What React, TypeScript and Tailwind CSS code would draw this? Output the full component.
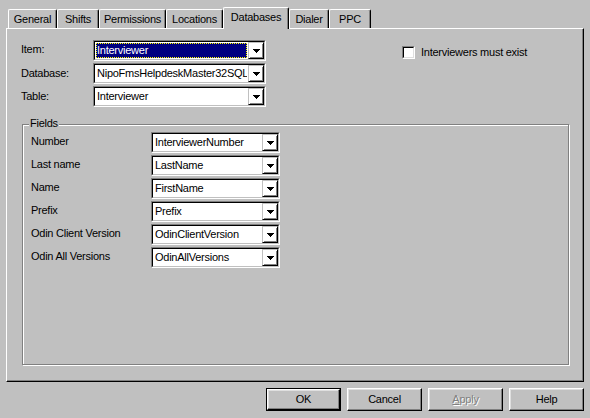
import React from 'react';

interface ComboProps {
  value: string;
  className: string;
  selected?: boolean;
}

const Arrow = () => (
  <svg width="7" height="4" viewBox="0 0 7 4" shapeRendering="crispEdges">
    <rect x="0" y="0" width="7" height="1" fill="#000" />
    <rect x="1" y="1" width="5" height="1" fill="#000" />
    <rect x="2" y="2" width="3" height="1" fill="#000" />
    <rect x="3" y="3" width="1" height="1" fill="#000" />
  </svg>
);

const Combo = ({ value, className, selected }: ComboProps) => (
  <div className={`${className} h-[21px] border border-t-[#808080] border-l-[#808080] border-r-white border-b-white`}>
    <div className="flex h-full border border-t-black border-l-black border-r-[#c0c0c0] border-b-[#c0c0c0] bg-white">
      <div className="flex-1 min-w-0 p-px">
        <div
          className={`h-full overflow-hidden whitespace-nowrap pl-px leading-[15px] ${
            selected
              ? 'bg-[#000080] text-white outline-1 outline-dotted outline-[#ffff00] -outline-offset-1'
              : 'text-black'
          }`}
        >
          {value}
        </div>
      </div>
      <div className="w-[16px] h-full flex items-center justify-center border border-t-[#c0c0c0] border-l-[#c0c0c0] border-r-black border-b-black shadow-[inset_1px_1px_0_#fff,inset_-1px_-1px_0_#808080]">
        <Arrow />
      </div>
    </div>
  </div>
);

const tabs = [
  { label: 'General', w: 'w-[49px]' },
  { label: 'Shifts', w: 'w-[42px]' },
  { label: 'Permissions', w: 'w-[67px]' },
  { label: 'Locations', w: 'w-[57px]' },
  { label: 'Databases', w: 'w-[66px]', active: true },
  { label: 'Dialer', w: 'w-[40px]' },
  { label: 'PPC', w: 'w-[42px]' },
];

const fields = [
  ['Number', 'InterviewerNumber'],
  ['Last name', 'LastName'],
  ['Name', 'FirstName'],
  ['Prefix', 'Prefix'],
  ['Odin Client Version', 'OdinClientVersion'],
  ['Odin All Versions', 'OdinAllVersions'],
];

const Button = ({ children, isDefault }: { children: React.ReactNode; isDefault?: boolean }) => (
  <div className={`w-[75px] h-[23px] ${isDefault ? 'border border-black' : ''}`}>
    <div className="h-full w-full flex items-center justify-center border border-t-white border-l-white border-r-black border-b-black shadow-[inset_-1px_-1px_0_#808080,inset_1px_1px_0_#dfdfdf]">
      {children}
    </div>
  </div>
);

const App: React.FC = () => {
  return (
    <div className="w-[590px] h-[418px] bg-[#c0c0c0] pt-[7px] overflow-hidden text-[11px] tracking-[-0.25px] text-black font-['Liberation_Sans',Arial,sans-serif]">
      {/* tab strip */}
      <div className="flex items-end h-[21px] ml-[8px]">
        {tabs.map((t) => (
          <div
            key={t.label}
            className={`${t.w} ${
              t.active ? 'h-[22px] -mb-px z-10 pb-[3px]' : 'h-[19px]'
            } relative flex items-center justify-center bg-[#c0c0c0] border-l border-t border-r border-l-white border-t-white border-r-black rounded-t-[2px] shadow-[inset_-1px_0_0_#808080]`}
          >
            {t.label}
          </div>
        ))}
      </div>

      {/* tab page */}
      <div className="ml-[6px] w-[578px] h-[354px] border border-l-white border-t-white border-r-black border-b-black shadow-[inset_-1px_-1px_0_#808080] pt-[11px] pl-[14px]">
        <div className="flex">
          <div className="grid grid-cols-[72px_173px] gap-y-[2px] items-center">
            <span className="leading-[13px] pb-[2px]">Item:</span>
            <Combo className="w-[173px]" value="Interviewer" selected />
            <span className="leading-[13px] pb-[1px]">Database:</span>
            <Combo className="w-[173px]" value="NipoFmsHelpdeskMaster32SQL" />
            <span className="leading-[13px]">Table:</span>
            <Combo className="w-[173px]" value="Interviewer" />
          </div>
          <div className="ml-[136px] mt-[6px] flex items-center h-[13px] gap-[6px]">
            <div className="w-[13px] h-[13px] border border-t-[#808080] border-l-[#808080] border-r-white border-b-white">
              <div className="h-full w-full bg-white border border-t-black border-l-black border-r-[#dfdfdf] border-b-[#dfdfdf]" />
            </div>
            <span className="leading-[13px]">Interviewers must exist</span>
          </div>
        </div>

        {/* Fields group */}
        <div className="relative mt-[17px] ml-px w-[547px] h-[241px] border border-[#808080] shadow-[inset_1px_1px_0_#fff,1px_1px_0_#fff] pt-[7px] pl-[8px]">
          <span className="absolute -top-[8px] left-[6px] px-px bg-[#c0c0c0] leading-[13px]">Fields</span>
          <div className="grid grid-cols-[120px_129px] gap-y-[2px] items-center">
            {fields.map(([label, value]) => (
              <React.Fragment key={label}>
                <span className="leading-[13px] pb-[2px]">{label}</span>
                <Combo className="w-[129px]" value={value} />
              </React.Fragment>
            ))}
          </div>
        </div>
      </div>

      {/* dialog buttons */}
      <div className="mt-[6px] flex justify-end gap-[6px] pr-[6px]">
        <Button isDefault>OK</Button>
        <Button>Cancel</Button>
        <Button>
          <span className="text-[#808080] [text-shadow:1px_1px_0_#fff]">
            <span className="underline">A</span>pply
          </span>
        </Button>
        <Button>Help</Button>
      </div>
    </div>
  );
};

export default App;
